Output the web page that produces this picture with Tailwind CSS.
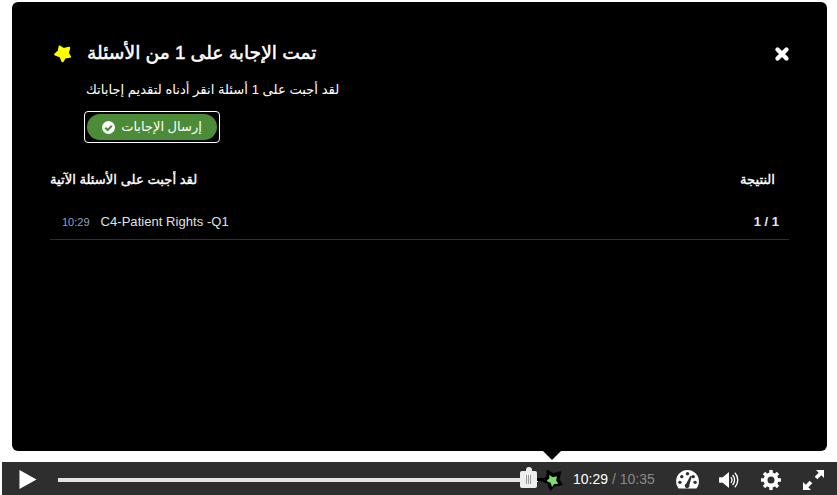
<!DOCTYPE html>
<html lang="ar">
<head>
  <meta charset="UTF-8" />
  <title>Quiz</title>
  <script src="https://cdn.jsdelivr.net/npm/@tailwindcss/browser@4"></script>
</head>
<body class="bg-white w-[837px] h-[495px] overflow-hidden font-['Liberation_Sans','DejaVu_Sans',sans-serif]">
  <div class="relative pt-[2px] pl-[12px]">
    <!-- Panel -->
    <div class="relative w-[815px] h-[449px] bg-black rounded-[6px] text-white">
      <div class="flex items-start justify-between pt-[38px] pl-[41px] pr-[37px]">
        <div class="flex items-center gap-[15px]">
          <svg class="w-[19px] h-[19px]" viewBox="0 0 24 24"><path fill="#ffff00" stroke="#ffff00" stroke-width="3" stroke-linejoin="round" d="M8.500 3.500l4.800 3 7-1.500-1.800 6.500 2.800 4.500-6.300.8-3 4.700-2.300-6L3 13l4.500-4z"/></svg>
          <h2 dir="rtl" class="text-[18.700px] font-normal [-webkit-text-stroke:0.5px_white] leading-[26px]">تمت الإجابة على 1 من الأسئلة</h2>
        </div>
        <svg class="w-[16px] h-[16px] mt-[6px]" viewBox="0 0 16 16"><path fill="none" stroke="#fff" stroke-width="4.400" stroke-linecap="round" d="M3.500 3.500l9 9M12.500 3.500l-9 9"/></svg>
      </div>
      <p dir="rtl" class="ml-[74px] mt-[14px] w-fit text-[13.150px] leading-[20px]">لقد أجبت على 1 أسئلة انقر أدناه لتقديم إجاباتك</p>
      <div class="ml-[72px] mt-[11px] w-fit border border-white rounded-[4px] p-[2px]">
        <button class="flex items-center gap-[6px] w-[130px] h-[26px] justify-center bg-[#4c8c38] rounded-[13px] text-[13px] text-white">
          <svg class="w-[13px] h-[13px]" viewBox="0 0 16 16"><circle cx="8" cy="8" r="8" fill="#fff"/><path fill="none" stroke="#4c8c38" stroke-width="2.600" d="M4 8.200l3 3 5-5.400"/></svg>
          <span dir="rtl">إرسال الإجابات</span>
        </button>
      </div>
      <div class="flex justify-between mt-[27px] pl-[38px] pr-[52px] text-[13.150px] font-normal [-webkit-text-stroke:0.35px_white] leading-[20px]">
        <span dir="rtl">لقد أجبت على الأسئلة الآتية</span>
        <span dir="rtl">النتيجة</span>
      </div>
      <div class="flex items-center justify-between mt-[15px] ml-[38px] mr-[38px] pl-[12px] pr-[10px] h-[35px] border-b border-[#2e2e2e]">
        <div class="flex items-baseline gap-[11px]">
          <span class="text-[11px] text-[#8fa3c0]">10:29</span>
          <span class="text-[13px] tracking-[0.05px] text-[#e0e0e0]">C4-Patient Rights -Q1</span>
        </div>
        <span class="text-[13px] font-bold text-[#e6e6e6]">1 / 1</span>
      </div>
    </div>
    <!-- Pointer -->
    <div class="absolute left-[543px] top-[451px] w-0 h-0 border-x-[9px] border-x-transparent border-t-[9px] border-t-black"></div>
  </div>
  <!-- Controls -->
  <div class="flex items-center ml-[2px] mt-[11px] w-[835px] h-[33px] bg-[#2e2e2e]">
    <svg class="ml-[17px] mt-[2px] w-[18px] h-[19px]" viewBox="0 0 18 20"><path fill="#fff" d="M0 0l18 10L0 20z"/></svg>
    <div class="relative ml-[21px] mt-[3px] w-[480px] h-[4px] bg-[#e4e4e4]">
      <div class="absolute left-[462px] top-[-11px] flex flex-col items-center">
        <div class="w-[6px] h-[4px] bg-[#eee] rounded-t-[3px]"></div>
        <div class="flex justify-center gap-[1px] w-[17px] h-[17px] pt-[4px] bg-[#eee] rounded-[2px]">
          <i class="w-[1px] h-[9px] bg-[#999]"></i><i class="w-[1px] h-[9px] bg-[#999]"></i><i class="w-[1px] h-[9px] bg-[#999]"></i>
        </div>
      </div>
      <div class="absolute left-[479px] top-0 w-[8px] h-[3px] bg-black"></div>
      <svg class="absolute left-[483px] top-[-9px] w-[22px] h-[22px]" viewBox="0 0 24 24"><path fill="#000" stroke="#000" stroke-width="2" stroke-linejoin="round" d="M7 2l6 3.500 8-2-2 8 3.500 5.500-8 1-4 4.500-3-7-6.500-3 6-4z"/><path fill="#7fdc6f" d="M9 6.500l4 2.500 4.500-1-1 4.500 2.500 3.500-4.700.3-2.300 3.200-1.500-4.500L6 13l3.200-2.800z"/></svg>
    </div>
    <span class="ml-[35px] mt-[2px] text-[14px] text-white whitespace-nowrap">10:29 <span class="text-[#8a8a8a]">/ 10:35</span></span>
    <svg class="ml-[21px] mt-[2px] w-[23px] h-[19px]" viewBox="0 0 24 20"><path fill="#fff" d="M12 0a12 12 0 0 1 12 12c0 3-1 5.500-2.600 7.500H2.600A11.500 11.500 0 0 1 0 12 12 12 0 0 1 12 0z"/><g fill="#2e2e2e"><circle cx="12" cy="4" r="1.800"/><circle cx="6" cy="7" r="1.800"/><circle cx="18" cy="7" r="1.800"/><circle cx="4" cy="13" r="1.800"/><circle cx="20" cy="13" r="1.800"/><path d="M15 6l1.500.7-2.500 9a2.500 2.500 0 1 1-3.300-1.500z"/></g></svg>
    <svg class="ml-[19px] mt-[2px] w-[22px] h-[18px]" viewBox="0 0 22 20"><path fill="#fff" d="M0 7h4l7-6v18l-7-6H0z"/><g fill="none" stroke="#fff" stroke-width="1.500"><path d="M13 7a4 4 0 0 1 0 6"/><path d="M15 4.500a8 8 0 0 1 0 11"/><path d="M17.500 2a11.500 11.500 0 0 1 0 16"/></g></svg>
    <svg class="ml-[21px] mt-[2px] w-[20px] h-[20px]" viewBox="0 0 20 20"><circle cx="10" cy="10" r="5.500" fill="none" stroke="#fff" stroke-width="4"/><path fill="none" stroke="#fff" stroke-width="3.400" d="M10 0v4M10 16v4M0 10h4M16 10h4M3 3l2.800 2.800M14.200 14.200L17 17M17 3l-2.800 2.800M5.800 14.200L3 17"/></svg>
    <svg class="ml-[22px] mt-[2px] w-[21px] h-[20px]" viewBox="0 0 21 20"><path fill="#fff" d="M13 0h8v8l-2.700-2.700-4 4-2.600-2.600 4-4zM8 20H0v-8l2.700 2.700 4-4 2.600 2.600-4 4z"/></svg>
  </div>
</body>
</html>
